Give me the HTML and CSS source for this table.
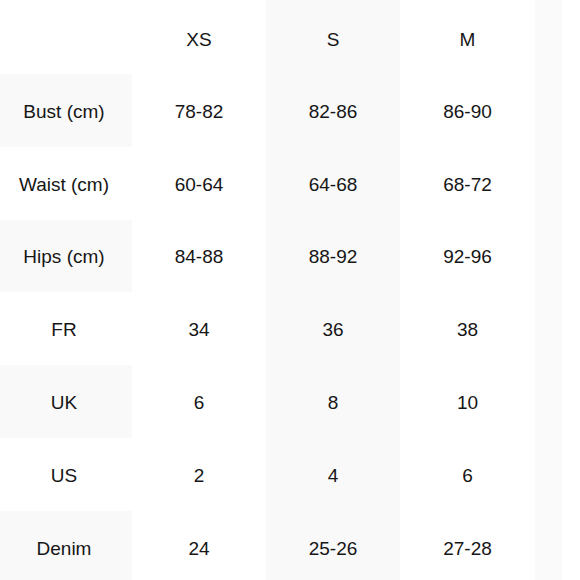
FILE: index.html
```html
<!DOCTYPE html>
<html>
<head>
<meta charset="utf-8">
<link rel="stylesheet" href="styles.css">
</head>
<body>
<div class="chart">
  <div class="cell head label"></div>
  <div class="cell head">XS</div>
  <div class="cell head alt">S</div>
  <div class="cell head">M</div>
  <div class="cell head alt edge"></div>

  <div class="cell label shade">Bust (cm)</div>
  <div class="cell">78-82</div>
  <div class="cell alt">82-86</div>
  <div class="cell">86-90</div>
  <div class="cell alt edge"></div>

  <div class="cell label">Waist (cm)</div>
  <div class="cell">60-64</div>
  <div class="cell alt">64-68</div>
  <div class="cell">68-72</div>
  <div class="cell alt edge"></div>

  <div class="cell label shade">Hips (cm)</div>
  <div class="cell">84-88</div>
  <div class="cell alt">88-92</div>
  <div class="cell">92-96</div>
  <div class="cell alt edge"></div>

  <div class="cell label">FR</div>
  <div class="cell">34</div>
  <div class="cell alt">36</div>
  <div class="cell">38</div>
  <div class="cell alt edge"></div>

  <div class="cell label shade">UK</div>
  <div class="cell">6</div>
  <div class="cell alt">8</div>
  <div class="cell">10</div>
  <div class="cell alt edge"></div>

  <div class="cell label">US</div>
  <div class="cell">2</div>
  <div class="cell alt">4</div>
  <div class="cell">6</div>
  <div class="cell alt edge"></div>

  <div class="cell label shade">Denim</div>
  <div class="cell">24</div>
  <div class="cell alt">25-26</div>
  <div class="cell">27-28</div>
  <div class="cell alt edge"></div>
</div>
</body>
</html>
```

FILE: styles.css
```css
html, body {
  margin: 0;
  padding: 0;
  background: #ffffff;
}

body {
  font-family: "Liberation Sans", Arial, sans-serif;
  color: #161616;
  overflow: hidden;
}

.chart {
  display: grid;
  grid-template-columns: 132px 134px 134px 135px 27px;
  grid-template-rows: 74px repeat(7, 72.8px);
  width: 562px;
}

.cell {
  display: flex;
  align-items: center;
  justify-content: center;
  font-size: 19px;
  line-height: 1;
  padding-top: 2px;
  box-sizing: border-box;
}

.head {
  padding-top: 4px;
}

.label {
  padding-right: 4px;
}

.shade {
  background: #f9f9f9;
}

.alt {
  background: #f9f9f9;
}

.edge {
  background: #fafafa;
}
```
